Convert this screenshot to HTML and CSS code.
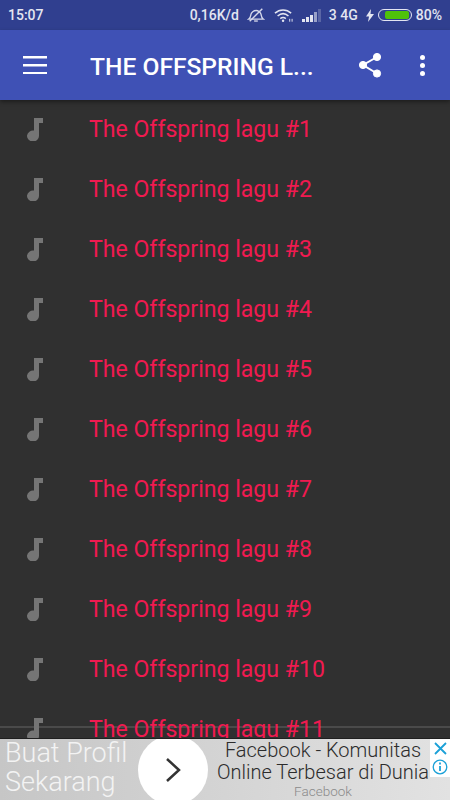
FILE: index.html
```html
<!DOCTYPE html>
<html lang="en">
<head>
    <meta charset="UTF-8">
    <meta name="viewport" content="width=device-width, initial-scale=1.0">
    <title>The Offspring lagu</title>
    <link rel="stylesheet" href="styles.css">
</head>
<body>
    <div class="phone">
        <div class="status-bar">
            <span class="status-time">15:07</span>
            <div class="status-right">
                <span>0,16K/d</span>
                <svg class="icon-bell" width="18" height="16" viewBox="0 0 20 16" fill="none" stroke="#d5d8ea" stroke-width="1.5">
                    <path d="M2 12.500c2-1.500 2-3 2.300-5C4.700 5 7.500 3 10 3s5.300 2 5.700 4.500c.3 2 .3 3.500 2.300 5z"/>
                    <path d="M8 14.700h4"/>
                    <path d="M3 15L17 1" stroke-width="1.600"/>
                </svg>
                <svg class="icon-wifi" width="20" height="15" viewBox="0 0 21 15" fill="none" stroke="#e3e5f1" stroke-width="1.600">
                    <path d="M1 5c5-4.500 12-4.500 17 0"/>
                    <path d="M3.800 8c3.500-3 8-3 11.400 0"/>
                    <path d="M6.600 10.800c1.800-1.400 4-1.400 5.800 0"/>
                    <circle cx="9.500" cy="13" r="1.300" fill="#e3e5f1" stroke="none"/>
                    <path d="M16.500 11v3M19 11v3" stroke-width="1"/>
                </svg>
                <svg class="icon-signal" width="19" height="13" viewBox="0 0 19 13">
                    <rect x="0" y="10" width="3" height="3" fill="#e3e5f1"/>
                    <rect x="4" y="8" width="3" height="5" fill="#e3e5f1"/>
                    <rect x="8" y="6" width="3" height="7" fill="#e3e5f1"/>
                    <rect x="12" y="3" width="3" height="10" fill="#99a1c8"/>
                    <rect x="16" y="0" width="3" height="13" fill="#5a66a5"/>
                </svg>
                <span class="status-net">3 4G</span>
                <svg class="icon-bolt" width="8" height="13" viewBox="0 0 8 13">
                    <path d="M5 0L0 7.500h3L2 13l6-8H4.500z" fill="#e3e5f1"/>
                </svg>
                <div class="battery"><div class="battery-level"></div></div>
                <span>80%</span>
            </div>
        </div>

        <div class="toolbar">
            <svg class="menu-icon" width="24" height="18" viewBox="0 0 24 18">
                <rect y="0" width="24" height="2.500" fill="#fff"/>
                <rect y="8" width="24" height="2.500" fill="#fff"/>
                <rect y="16" width="24" height="2.500" fill="#fff"/>
            </svg>
            <div class="toolbar-title">THE OFFSPRING L...</div>
            <svg class="share-icon" width="24" height="26" viewBox="0 0 24 26" fill="#fff" stroke="#fff">
                <circle cx="19" cy="5" r="3.600"/>
                <circle cx="5" cy="13" r="3.600"/>
                <circle cx="19" cy="21.500" r="3.600"/>
                <path d="M19 5L5 13l14 8.500" fill="none" stroke-width="2"/>
            </svg>
            <div class="more-icon"><i></i><i></i><i></i></div>
        </div>

        <div class="list">
            <div class="list-line"></div>
            <div class="row"><svg class="note" viewBox="0 0 18 24"><path d="M8 1h9v5h-4v13a6 5.500 0 1 1-5-5.400z"/></svg><span>The Offspring lagu #1</span></div>
            <div class="row"><svg class="note" viewBox="0 0 18 24"><path d="M8 1h9v5h-4v13a6 5.500 0 1 1-5-5.400z"/></svg><span>The Offspring lagu #2</span></div>
            <div class="row"><svg class="note" viewBox="0 0 18 24"><path d="M8 1h9v5h-4v13a6 5.500 0 1 1-5-5.400z"/></svg><span>The Offspring lagu #3</span></div>
            <div class="row"><svg class="note" viewBox="0 0 18 24"><path d="M8 1h9v5h-4v13a6 5.500 0 1 1-5-5.400z"/></svg><span>The Offspring lagu #4</span></div>
            <div class="row"><svg class="note" viewBox="0 0 18 24"><path d="M8 1h9v5h-4v13a6 5.500 0 1 1-5-5.400z"/></svg><span>The Offspring lagu #5</span></div>
            <div class="row"><svg class="note" viewBox="0 0 18 24"><path d="M8 1h9v5h-4v13a6 5.500 0 1 1-5-5.400z"/></svg><span>The Offspring lagu #6</span></div>
            <div class="row"><svg class="note" viewBox="0 0 18 24"><path d="M8 1h9v5h-4v13a6 5.500 0 1 1-5-5.400z"/></svg><span>The Offspring lagu #7</span></div>
            <div class="row"><svg class="note" viewBox="0 0 18 24"><path d="M8 1h9v5h-4v13a6 5.500 0 1 1-5-5.400z"/></svg><span>The Offspring lagu #8</span></div>
            <div class="row"><svg class="note" viewBox="0 0 18 24"><path d="M8 1h9v5h-4v13a6 5.500 0 1 1-5-5.400z"/></svg><span>The Offspring lagu #9</span></div>
            <div class="row"><svg class="note" viewBox="0 0 18 24"><path d="M8 1h9v5h-4v13a6 5.500 0 1 1-5-5.400z"/></svg><span>The Offspring lagu #10</span></div>
            <div class="row"><svg class="note" viewBox="0 0 18 24"><path d="M8 1h9v5h-4v13a6 5.500 0 1 1-5-5.400z"/></svg><span>The Offspring lagu #11</span></div>
        </div>

        <div class="ad">
            <div class="ad-left">Buat Profil Sekarang</div>
            <div class="ad-circle">
                <svg width="16" height="26" viewBox="0 0 16 26" fill="none" stroke="#333" stroke-width="2.500"><path d="M2 2l12 11L2 24"/></svg>
            </div>
            <div class="ad-text">
                <div>Facebook - Komunitas</div>
                <div>Online Terbesar di Dunia</div>
                <div class="ad-source">Facebook</div>
            </div>
            <div class="ad-badge">
                <svg width="15" height="15" viewBox="0 0 15 15" stroke="#1ba1d8" stroke-width="1.800"><path d="M2 2l11 11M13 2L2 13"/></svg>
                <svg width="16" height="16" viewBox="0 0 16 16" fill="none" stroke="#1ba1d8" stroke-width="1.300">
                    <circle cx="8" cy="8" r="6.800"/>
                    <path d="M8 7v5" stroke-width="1.800"/>
                    <path d="M8 3.600v1.800" stroke-width="1.800"/>
                </svg>
            </div>
        </div>
    </div>
</body>
</html>
```

FILE: styles.css
```css
body {
    margin: 0;
    font-family: Roboto, "Noto Sans", sans-serif;
    background: #303030;
}

.phone {
    width: 450px;
    height: 800px;
    display: flex;
    flex-direction: column;
    overflow: hidden;
}

.status-bar {
    height: 30px;
    flex-shrink: 0;
    background: #303f8f;
    color: #e3e5f1;
    font-size: 14px;
    font-weight: 500;
    display: flex;
    justify-content: space-between;
    align-items: center;
    padding: 0 8px;
}

.status-right {
    display: flex;
    align-items: center;
}

.icon-bell { margin-left: 8px; }
.icon-wifi { margin-left: 9px; }
.icon-signal { margin-left: 8px; }
.status-net { margin-left: 8px; }
.icon-bolt { margin-left: 8px; }

.battery {
    width: 34px;
    height: 12px;
    box-sizing: border-box;
    margin: 0 4px 0 4px;
    padding: 1px 2px 1px 6px;
    border: 1px solid #e3e5f1;
    border-radius: 6px;
}

.battery-level {
    height: 8px;
    background: #4fc20a;
    border-radius: 2px;
}

.toolbar {
    height: 70px;
    flex-shrink: 0;
    background: #3f51b5;
    display: flex;
    align-items: center;
    box-shadow: 0 2px 4px rgba(0, 0, 0, 0.4);
    position: relative;
    z-index: 1;
}

.menu-icon {
    margin-left: 23px;
    flex-shrink: 0;
}

.toolbar-title {
    width: 245px;
    margin-left: 43px;
    padding-top: 2px;
    color: #fff;
    font-size: 24.600px;
    font-weight: 500;
    white-space: nowrap;
}

.share-icon {
    margin-left: 23px;
    flex-shrink: 0;
}

.more-icon {
    margin-left: 38px;
    display: flex;
    flex-direction: column;
    gap: 3px;
}

.more-icon i {
    width: 5px;
    height: 5px;
    border-radius: 50%;
    background: #fff;
}

.list {
    flex: 1;
    position: relative;
    overflow: hidden;
    background: #303030;
    margin-top: -1px;
}

.row {
    height: 60px;
    position: relative;
    display: flex;
    align-items: center;
    color: #f01a50;
    font-size: 23.100px;
}

.note {
    width: 18px;
    height: 24px;
    margin-left: 26px;
    margin-right: 45px;
    fill: #757575;
}

.list-line {
    position: absolute;
    left: 0;
    right: 0;
    bottom: 10px;
    height: 2px;
    background: #4a4a4a;
}

.ad {
    height: 62px;
    flex-shrink: 0;
    border-top: 1px solid #1f1f1f;
    box-sizing: border-box;
    background: linear-gradient(90deg, #c6c6c6 0%, #e2e2e2 100%);
    display: flex;
    overflow: hidden;
}

.ad-left {
    width: 133px;
    padding-left: 5px;
    flex-shrink: 0;
    color: #f3f3f3;
    font-size: 27px;
    font-weight: 300;
    line-height: 29px;
}

.ad-circle {
    width: 70px;
    height: 70px;
    margin-top: -4px;
    flex-shrink: 0;
    border-radius: 50%;
    background: #fff;
    display: flex;
    align-items: center;
    justify-content: center;
}

.ad-text {
    flex: 1;
    padding-left: 8px;
    text-align: center;
    color: #2c2c2c;
    font-size: 20px;
    font-weight: 300;
    line-height: 22px;
    white-space: nowrap;
}

.ad-source {
    font-size: 13.500px;
    line-height: 16px;
    color: #8a8a8a;
}

.ad-badge {
    width: 20px;
    height: 38px;
    flex-shrink: 0;
    background: #fff;
    display: flex;
    flex-direction: column;
    align-items: center;
    gap: 3px;
    padding-top: 2px;
    box-sizing: border-box;
}
```
